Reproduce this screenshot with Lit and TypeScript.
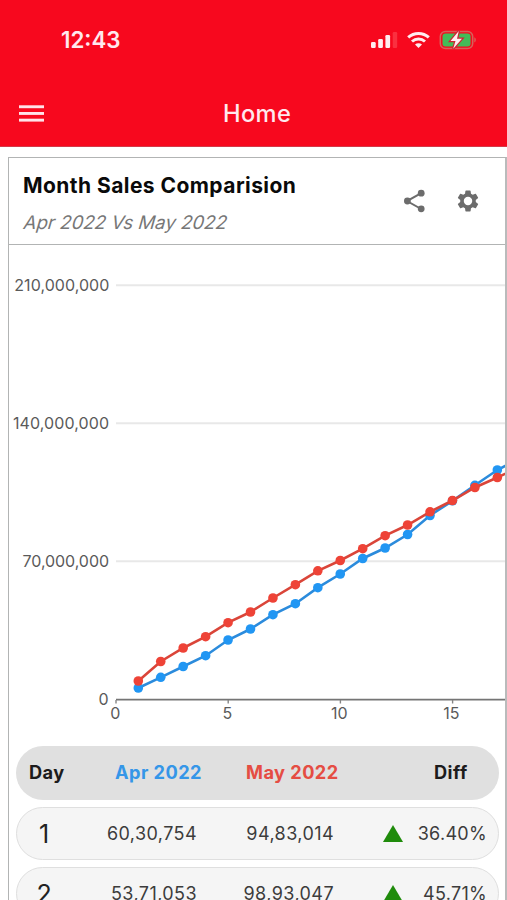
import { LitElement, html, svg, css } from "lit";
import { customElement, property } from "lit/decorators.js";

const APRIL = [688, 677.3, 666.5, 655.7, 640, 629, 614.7, 603.7, 587.7, 574, 558.5, 548, 534.5, 515.5, 500.8, 485.3, 470, 458.5];
const MAY = [681, 661.5, 648, 636.7, 622.7, 612, 598, 584.7, 570.8, 560.5, 548.7, 535.7, 525, 511.8, 500.5, 487.5, 477.5, 467];
const CHART_TOP = 245;

@customElement("sales-chart")
export class SalesChart extends LitElement {
  static styles = css`
    :host { display: block; height: 492px; }
    svg { display: block; width: 496px; height: 492px; }
    text { font-family: Inter, sans-serif; font-size: 16px; fill: #5a5a5a; }
    .grid { stroke: #e8e8e8; stroke-width: 2; }
    .axis { stroke: #757575; stroke-width: 1.7; }
    .tick { stroke: #858585; stroke-width: 1.4; }
    .april { stroke: #2b8bdc; fill: #2196f3; }
    .may { stroke: #da4539; fill: #ee4337; }
    polyline { stroke-width: 2.6; }
    circle { stroke: none; }
  `;
  private series(values: number[], name: string) {
    const pts = values.map((y, i) => [107 + 22.44 * i + 22.3, y - CHART_TOP]);
    return svg`<g class=${name}>
      <polyline fill="none" points=${pts.map((p) => p.join(",")).join(" ")}></polyline>
      ${pts.map((p) => svg`<circle cx=${p[0]} cy=${p[1]} r="4.8"></circle>`)}
    </g>`;
  }
  render() {
    const rows: [string, number, number, number][] = [
      ["210,000,000", 285.3, 14.3, 95],
      ["140,000,000", 423.3, 13, 96],
      ["70,000,000", 561.3, 22.5, 86.5],
    ];
    return html`<svg viewBox="0 0 496 492">
      ${rows.map(([t, y, x, w]) => svg`
        <line class="grid" x1="107" x2="496" y1=${y - CHART_TOP} y2=${y - CHART_TOP}></line>
        <text x=${x - 9} y=${y - CHART_TOP + 5.7} textLength=${w}>${t}</text>`)}
      <text x="89.5" y="460.2" textLength="9.5">0</text>
      <line class="axis" x1="107" x2="496" y1="454.6" y2="454.6"></line>
      ${this.series(APRIL, "april")}
      ${this.series(MAY, "may")}
      ${[0, 5, 10, 15].map((n) => svg`
        <line class="tick" x1=${107 + n * 22.44} x2=${107 + n * 22.44} y1="455" y2="458.5"></line>
        <text x=${106.4 + n * 22.4} y="473.6" text-anchor="middle">${n}</text>`)}
    </svg>`;
  }
}

@customElement("sales-row")
export class SalesRow extends LitElement {
  @property() day = "";
  @property() april = "";
  @property() may = "";
  @property() diff = "";
  static styles = css`
    :host {
      box-sizing: border-box; display: grid; align-items: center;
      grid-template-columns: 54px 132px 138px 1fr;
      height: 53px; border: 1.5px solid #dfdfdf; border-radius: 27px;
      background: #f5f5f5; color: #3c3c3c; font-size: 18px; padding-right: 11px;
    }
    .day { font-size: 25px; text-align: center; color: #222; }
    .num { text-align: right; letter-spacing: 0.42px; }
    .april { padding-right: 6px; }
    .may { padding-right: 7px; }
    .diff { display: flex; align-items: center; justify-content: flex-end; letter-spacing: 0.3px; }
    .up {
      width: 20px; height: 17px; background: #1f8b0b;
      clip-path: polygon(50% 0, 100% 100%, 0 100%); margin-right: auto; margin-left: 42px;
    }
  `;
  render() {
    return html`
      <span class="day">${this.day}</span>
      <span class="num april">${this.april}</span>
      <span class="num may">${this.may}</span>
      <span class="diff"><span class="up"></span><span>${this.diff}</span></span>`;
  }
}

@customElement("app-root")
export class AppRoot extends LitElement {
  static styles = css`
    :host {
      display: flex; flex-direction: column; box-sizing: border-box;
      height: 900px; overflow: hidden; background: #fff;
      font-family: Inter, sans-serif; line-height: 1.2; white-space: nowrap;
    }
    .top { flex: none; height: 146px; background: #f7081e; border-bottom: 1px solid #d33a49; color: #ffe9ee; }
    .status { display: flex; align-items: center; height: 80px; padding: 0 30px 0 61px; }
    .time { font-size: 22.3px; font-weight: 600; flex: 1; margin-top: 1px; }
    .status svg { display: block; }
    .bar { display: grid; grid-template-columns: 223px 1fr; align-items: center; height: 67px; }
    .bar svg { display: block; margin-left: 19px; }
    .home { font-size: 23.6px; font-weight: 500; letter-spacing: 0.4px; margin-top: 2px; }
    .card {
      flex: none; box-sizing: border-box; margin: 10px 0 0 8px; width: 499px; height: 760px;
      border: 1.6px solid #b2b4b4; border-right: 2px solid #b9bbbb; overflow: hidden;
    }
    .head {
      display: flex; align-items: center; height: 86px; padding: 0 24px 0 14px;
      border-bottom: 1.6px solid #b2b4b4; gap: 28px;
    }
    .titles { flex: 1; display: flex; flex-direction: column; gap: 13px; padding-top: 4px; }
    .title { font-size: 21px; font-weight: 700; letter-spacing: 0.44px; color: #0a0a0a; }
    .sub {
      font-size: 18.6px; color: #777; letter-spacing: 0.02px;
      transform: skewX(-16deg); transform-origin: 0 70%;
    }
    .rows { display: flex; flex-direction: column; gap: 7px; padding: 9px 6px 0 7px; }
    .columns {
      box-sizing: border-box; height: 54px; border-radius: 27px; background: #e0e0e0;
      display: grid; grid-template-columns: 86px 131px 188px 1fr; align-items: center;
      padding-left: 13px;
      font-size: 18.2px; font-weight: 700; letter-spacing: 0.45px; color: #1c1c1c;
    }
    .april { color: #3596e8; }
    .may { color: #e54d43; }
  `;
  render() {
    return html`
      <header class="top">
        <div class="status">
          <span class="time">12:43</span>
          <svg width="108" height="20" viewBox="0 0 108 20">
            <g fill="#ffecef">
              <rect x="2" y="12" width="4.7" height="6" rx="1.2"></rect>
              <rect x="9.2" y="9" width="4.7" height="9" rx="1.2"></rect>
              <rect x="16.4" y="5" width="4.7" height="13" rx="1.2"></rect>
            </g>
            <rect x="23.7" y="2" width="4.5" height="16" rx="1.2" fill="#fa3040"></rect>
            <g fill="none" stroke="#ffecef" stroke-width="3">
              <path d="M39.2 7.4a15.2 15.2 0 0 1 20.6 0"></path>
              <path d="M43 11.5a9.7 9.7 0 0 1 13 0"></path>
            </g>
            <path d="M49.5 18l-3.5-3.4a5 5 0 0 1 7 0z" fill="#ffecef"></path>
            <rect x="71.3" y="1.5" width="32.4" height="17" rx="5" fill="none" stroke="#d7605a" stroke-width="1.5"></rect>
            <path d="M105.3 7.3c2 .8 2 4.4 0 5.2z" fill="#d7605a"></path>
            <rect x="73.5" y="3.6" width="28" height="12.8" rx="3" fill="#43bc58"></rect>
            <path d="M89.8 1L81.5 11h5L84.2 18.8 93 8.8h-5z" fill="#ffeef0" stroke="#cf2332" stroke-width="2.4" paint-order="stroke"></path>
          </svg>
        </div>
        <div class="bar">
          <svg width="25" height="20" viewBox="0 0 25 20" fill="#ffe3e9">
            <rect y="1.3" width="25" height="2.9"></rect>
            <rect y="8" width="25" height="2.9"></rect>
            <rect y="14.7" width="25" height="2.9"></rect>
          </svg>
          <span class="home">Home</span>
        </div>
      </header>
      <main class="card">
        <div class="head">
          <div class="titles">
            <span class="title">Month Sales Comparision</span>
            <span class="sub">Apr 2022 Vs May 2022</span>
          </div>
          <svg width="26" height="26" viewBox="0 0 26 26" fill="#6c6c6c">
            <path d="M20.2 5.2L6 13l14.2 8" fill="none" stroke="#6c6c6c" stroke-width="2"></path>
            <circle cx="20.2" cy="5.2" r="3.4"></circle>
            <circle cx="6.4" cy="13" r="3.4"></circle>
            <circle cx="20.2" cy="20.8" r="3.4"></circle>
          </svg>
          <svg width="26" height="26" viewBox="0 0 24 24" fill="#6c6c6c">
            <path d="M19.14 12.94c.04-.3.06-.61.06-.94 0-.32-.02-.64-.07-.94l2.03-1.58a.49.49 0 0 0 .12-.61l-1.92-3.32a.49.49 0 0 0-.59-.22l-2.39.96a7 7 0 0 0-1.62-.94l-.36-2.54a.48.48 0 0 0-.48-.41h-3.84a.47.47 0 0 0-.47.41l-.36 2.54c-.59.24-1.13.57-1.62.94l-2.39-.96a.48.48 0 0 0-.59.22L2.74 8.87a.47.47 0 0 0 .12.61l2.03 1.58c-.05.3-.09.63-.09.94s.02.64.07.94l-2.03 1.58a.49.49 0 0 0-.12.61l1.92 3.32c.12.22.37.29.59.22l2.39-.96c.5.38 1.03.7 1.62.94l.36 2.54c.05.24.24.41.48.41h3.84c.24 0 .44-.17.47-.41l.36-2.54a7 7 0 0 0 1.62-.94l2.39.96c.22.08.47 0 .59-.22l1.92-3.32a.47.47 0 0 0-.12-.61zM12 15.9a3.9 3.9 0 1 1 0-7.8 3.9 3.9 0 0 1 0 7.8z"></path>
          </svg>
        </div>
        <sales-chart></sales-chart>
        <div class="rows">
          <div class="columns">
            <span class="day">Day</span><span class="april">Apr 2022</span>
            <span class="may">May 2022</span><span class="diff">Diff</span>
          </div>
          <sales-row day="1" april="60,30,754" may="94,83,014" diff="36.40%"></sales-row>
          <sales-row day="2" april="53,71,053" may="98,93,047" diff="45.71%"></sales-row>
        </div>
      </main>`;
  }
}
